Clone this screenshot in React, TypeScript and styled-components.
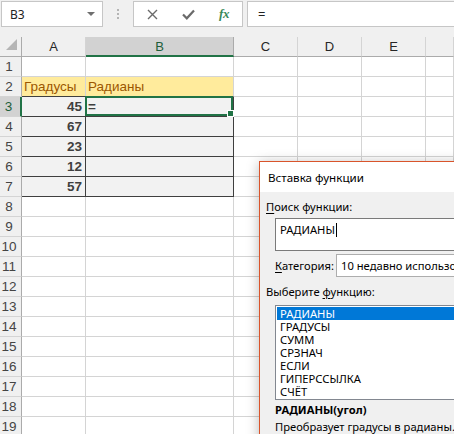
import React from 'react';
import styled, { createGlobalStyle } from 'styled-components';

const Global = createGlobalStyle`
  html, body { margin: 0; padding: 0; background: #ffffff; }
  body { width: 454px; height: 434px; overflow: hidden; }
`;

const Screen = styled.div`
  position: relative;
  width: 454px;
  height: 434px;
  overflow: hidden;
  background: #ffffff;
  font-family: "Liberation Sans", Arial, sans-serif;
`;

/* ---------- formula bar ---------- */
const FormulaBar = styled.div`
  display: flex;
  align-items: flex-start;
  height: 37px;
  box-sizing: border-box;
  padding-top: 1px;
  background: #f0f0f0;
  font-family: "Noto Sans", "Liberation Sans", sans-serif;
`;

const NameBox = styled.div`
  display: flex;
  align-items: center;
  justify-content: space-between;
  margin-left: 1px;
  width: 102px;
  height: 26px;
  box-sizing: border-box;
  padding: 0 7px 0 8px;
  background: #ffffff;
  border: 1px solid #c6c6c6;
  font-size: 12px;
  color: #222222;
`;

const DropArrow = styled.span`
  width: 0;
  height: 0;
  border-left: 4px solid transparent;
  border-right: 4px solid transparent;
  border-top: 4px solid #6f6f6f;
`;

const Grip = styled.div`
  width: 30px;
  height: 26px;
  display: flex;
  flex-direction: column;
  align-items: center;
  justify-content: center;
  gap: 2px;
`;

const GripDot = styled.span`
  width: 2px;
  height: 2px;
  background: #b4b4b4;
`;

const ButtonGroup = styled.div`
  display: flex;
  width: 110px;
  height: 26px;
  box-sizing: border-box;
  background: #ffffff;
  border: 1px solid #c6c6c6;
`;

const BarButton = styled.div`
  width: 36px;
  display: flex;
  align-items: center;
  justify-content: center;
`;

const Fx = styled.span`
  font-family: "Liberation Serif", "DejaVu Serif", serif;
  font-style: italic;
  font-weight: 700;
  font-size: 13px;
  color: #3a8a5a;
  letter-spacing: -0.5px;
`;

const FormulaInput = styled.div`
  flex: 1;
  margin-left: 4px;
  margin-right: -2px;
  height: 26px;
  box-sizing: border-box;
  display: flex;
  align-items: center;
  padding-left: 10px;
  background: #ffffff;
  border: 1px solid #c6c6c6;
  font-size: 13px;
  color: #222222;
`;

/* ---------- sheet ---------- */
const Sheet = styled.div`
  display: grid;
  grid-template-columns: 22px 64px 148px 64px 64px 64px 1fr;
  grid-auto-rows: 20px;
`;

const Corner = styled.div`
  box-sizing: border-box;
  background: #f0f0f0;
  border-right: 1px solid #ababab;
  border-bottom: 1px solid #ababab;
  display: flex;
  align-items: flex-end;
  justify-content: flex-end;
  padding: 0 4px 6px 0;
`;

const ColHeader = styled.div<{ $selected?: boolean }>`
  box-sizing: border-box;
  display: flex;
  align-items: center;
  justify-content: center;
  background: ${p => (p.$selected ? '#d2d2d2' : '#f0f0f0')};
  border-right: 1px solid ${p => (p.$selected ? '#ababab' : '#d4d4d4')};
  border-bottom: ${p => (p.$selected ? '2px solid #217346' : '1px solid #ababab')};
  font-size: 13px;
  color: ${p => (p.$selected ? '#1e5e3a' : '#262626')};
`;

const RowHeader = styled.div<{ $selected?: boolean }>`
  box-sizing: border-box;
  display: flex;
  align-items: center;
  justify-content: center;
  padding-right: 3px;
  background: ${p => (p.$selected ? '#d2d2d2' : '#f0f0f0')};
  border-right: ${p => (p.$selected ? '2px solid #217346' : '1px solid #ababab')};
  border-bottom: 1px solid #d4d4d4;
  font-size: 13.5px;
  color: ${p => (p.$selected ? '#1e5e3a' : '#444444')};
`;

type Variant = 'plain' | 'neutral' | 'output';

const cellBg: Record<Variant, string> = {
  plain: '#ffffff',
  neutral: '#ffeb9c',
  output: '#f2f2f2',
};
const cellInk: Record<Variant, string> = {
  plain: '#000000',
  neutral: '#9c5700',
  output: '#3f3f3f',
};

const Cell = styled.div<{
  $variant: Variant;
  $darkRight?: boolean;
  $darkBottom?: boolean;
  $align?: 'left' | 'right';
}>`
  position: relative;
  box-sizing: border-box;
  display: flex;
  align-items: center;
  justify-content: ${p => (p.$align === 'right' ? 'flex-end' : 'flex-start')};
  padding: 0 3px 0 2px;
  white-space: nowrap;
  background: ${p => cellBg[p.$variant]};
  color: ${p => cellInk[p.$variant]};
  font-weight: ${p => (p.$variant === 'output' ? 700 : 400)};
  font-size: 13.5px;
  border-right: 1px solid ${p => (p.$darkRight ? '#3f3f3f' : '#d4d4d4')};
  border-bottom: 1px solid ${p => (p.$darkBottom ? '#3f3f3f' : '#d4d4d4')};
`;

const Selection = styled.div`
  position: absolute;
  top: -1px;
  left: -1px;
  right: 0;
  bottom: 0;
  border: 2px solid #217346;
  pointer-events: none;
`;

const FillHandle = styled.div`
  position: absolute;
  right: -3px;
  bottom: -3px;
  width: 5px;
  height: 5px;
  background: #217346;
  border: 1px solid #ffffff;
`;

/* ---------- dialog ---------- */
const Dialog = styled.div`
  position: absolute;
  left: 259px;
  top: 161px;
  width: 230px;
  height: 300px;
  box-sizing: border-box;
  border: 1px solid #d9542b;
  background: #f0f0f0;
  box-shadow: 0 2px 12px rgba(0, 0, 0, 0.28);
  font-family: "Noto Sans", "Liberation Sans", sans-serif;
  font-size: 11.2px;
  color: #000000;
  display: flex;
  flex-direction: column;
`;

const TitleBar = styled.div`
  height: 30px;
  background: #ffffff;
  display: flex;
  align-items: center;
  padding-left: 8px;
  padding-top: 1px;
  box-sizing: border-box;
  font-size: 11.6px;
`;

const DialogBody = styled.div`
  display: flex;
  flex-direction: column;
  padding: 7px 0 0 6px;
`;

const Label = styled.div<{ $indent?: boolean; $bold?: boolean; $gap?: number }>`
  line-height: 16px;
  white-space: nowrap;
  margin-left: ${p => (p.$indent ? '9px' : '0')};
  margin-top: ${p => p.$gap ?? 0}px;
  font-weight: ${p => (p.$bold ? 700 : 400)};
`;

const Key = styled.span`
  text-decoration: underline;
  text-underline-offset: 2px;
`;

const SearchBox = styled.div`
  margin: 3px 0 0 9px;
  height: 33px;
  box-sizing: border-box;
  background: #ffffff;
  border: 1px solid #7a7a7a;
  padding: 3px 0 0 4px;
  line-height: 16px;
  white-space: nowrap;
`;

const Caret = styled.span`
  display: inline-block;
  width: 1px;
  height: 14px;
  background: #000000;
  vertical-align: -3px;
  margin-left: 1px;
`;

const CategoryRow = styled.div`
  display: flex;
  align-items: center;
  margin: 3px 0 0 9px;
  height: 23px;
`;

const CategoryLabel = styled.span`
  width: 61px;
  flex: none;
  white-space: nowrap;
`;

const Select = styled.div`
  flex: 1;
  height: 23px;
  box-sizing: border-box;
  background: #ffffff;
  border: 1px solid #adadad;
  display: flex;
  align-items: center;
  padding-left: 4px;
  white-space: nowrap;
  overflow: hidden;
`;

const ListBox = styled.div`
  margin: 5px 0 0 9px;
  height: 95px;
  box-sizing: border-box;
  background: #ffffff;
  border: 1px solid #828790;
  padding: 1px 0 0 1px;
  display: flex;
  flex-direction: column;
`;

const ListItem = styled.div<{ $active?: boolean }>`
  height: 13px;
  line-height: 13px;
  padding-left: 3px;
  white-space: nowrap;
  background: ${p => (p.$active ? '#0078d7' : 'transparent')};
  color: ${p => (p.$active ? '#ffffff' : '#000000')};
`;

/* ---------- data ---------- */
const COLS = ['A', 'B', 'C', 'D', 'E', 'F'];
const VALUES: Record<number, string> = { 3: '45', 4: '67', 5: '23', 6: '12', 7: '57' };
const FUNCS = ['РАДИАНЫ', 'ГРАДУСЫ', 'СУММ', 'СРЗНАЧ', 'ЕСЛИ', 'ГИПЕРССЫЛКА', 'СЧЁТ'];

function renderRow(r: number) {
  const isOutput = r >= 3 && r <= 7;
  const cells = COLS.map(col => {
    const key = `${col}${r}`;
    if (col === 'A' || col === 'B') {
      if (r === 2) {
        return (
          <Cell key={key} $variant="neutral" $darkBottom>
            {col === 'A' ? 'Градусы' : 'Радианы'}
          </Cell>
        );
      }
      if (isOutput) {
        const selected = col === 'B' && r === 3;
        return (
          <Cell
            key={key}
            $variant="output"
            $darkRight
            $darkBottom
            $align={col === 'A' ? 'right' : 'left'}
          >
            {col === 'A' ? VALUES[r] : selected ? '=' : ''}
            {selected && (
              <Selection>
                <FillHandle />
              </Selection>
            )}
          </Cell>
        );
      }
    }
    return <Cell key={key} $variant="plain" />;
  });
  return (
    <React.Fragment key={r}>
      <RowHeader $selected={r === 3}>{r}</RowHeader>
      {cells}
    </React.Fragment>
  );
}

export default function App() {
  const rows = Array.from({ length: 19 }, (_, i) => i + 1);
  return (
    <Screen>
      <Global />
      <FormulaBar>
        <NameBox>
          <span>B3</span>
          <DropArrow />
        </NameBox>
        <Grip>
          <GripDot />
          <GripDot />
          <GripDot />
        </Grip>
        <ButtonGroup>
          <BarButton>
            <svg width="11" height="11" viewBox="0 0 11 11">
              <path d="M1 1 L10 10 M10 1 L1 10" stroke="#6a6a6a" strokeWidth="1.4" fill="none" />
            </svg>
          </BarButton>
          <BarButton>
            <svg width="13" height="11" viewBox="0 0 13 11">
              <path d="M1 5.5 L4.8 9.3 L12 1.5" stroke="#6a6a6a" strokeWidth="2.2" fill="none" />
            </svg>
          </BarButton>
          <BarButton>
            <Fx>fx</Fx>
          </BarButton>
        </ButtonGroup>
        <FormulaInput>=</FormulaInput>
      </FormulaBar>

      <Sheet>
        <Corner>
          <svg width="11" height="11" viewBox="0 0 11 11">
            <polygon points="11,0 11,11 0,11" fill="#b5b5b5" />
          </svg>
        </Corner>
        {COLS.map(c => (
          <ColHeader key={c} $selected={c === 'B'}>
            {c === 'F' ? '' : c}
          </ColHeader>
        ))}
        {rows.map(renderRow)}
      </Sheet>

      <Dialog>
        <TitleBar>Вставка функции</TitleBar>
        <DialogBody>
          <Label>
            <Key>П</Key>оиск функции:
          </Label>
          <SearchBox>
            РАДИАНЫ
            <Caret />
          </SearchBox>
          <CategoryRow>
            <CategoryLabel>
              <Key>К</Key>атегория:
            </CategoryLabel>
            <Select>10 недавно использовавшихся</Select>
          </CategoryRow>
          <Label $gap={7}>
            Выберите <Key>ф</Key>ункцию:
          </Label>
          <ListBox>
            {FUNCS.map((f, i) => (
              <ListItem key={f} $active={i === 0}>
                {f}
              </ListItem>
            ))}
          </ListBox>
          <Label $indent $bold $gap={2}>
            РАДИАНЫ(угол)
          </Label>
          <Label $indent $gap={1}>
            Преобразует градусы в радианы.
          </Label>
        </DialogBody>
      </Dialog>
    </Screen>
  );
}
